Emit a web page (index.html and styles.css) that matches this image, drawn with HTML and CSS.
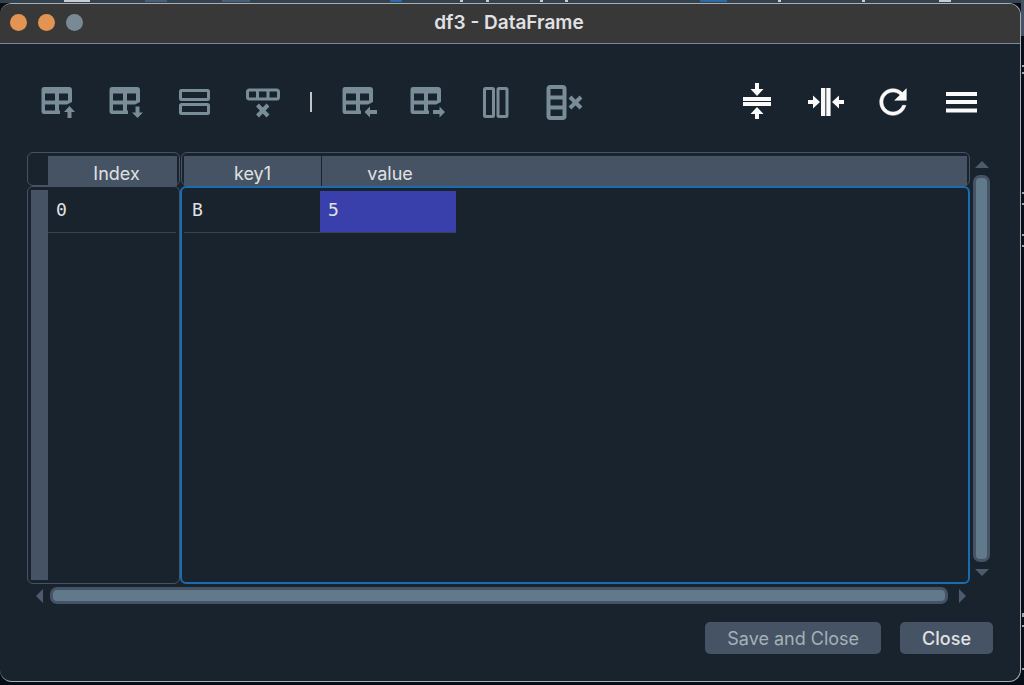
FILE: index.html
```
<!DOCTYPE html>
<html lang="en">
<head>
    <meta charset="UTF-8">
    <meta name="viewport" content="width=device-width, initial-scale=1.0">
    <title>df3 - DataFrame</title>
    <link rel="stylesheet" href="styles.css">
</head>
<body>
    <!-- shared icon shapes -->
    <svg class="sprite" aria-hidden="true">
        <symbol id="grid" viewBox="0 0 40 40">
            <path fill-rule="evenodd" d="M6 5H31Q34 5 34 8V20L29 22.500H21V28.500H22V32H6Q3.500 32 3.500 29V8Q3.500 5 6 5ZM7 11.500V18.500H17V11.500ZM21 11.500V18.500H30V11.500ZM7 22.500V28.500H17V22.500Z"/>
        </symbol>
    </svg>

    <div class="window">
        <header class="titlebar">
            <div class="lights">
                <span class="light"></span>
                <span class="light"></span>
                <span class="light light-off"></span>
            </div>
            <h1>df3 - DataFrame</h1>
        </header>

        <main class="content">
            <div class="toolbar" role="toolbar" aria-label="DataFrame tools">
                <button class="tool" disabled aria-label="Insert row above">
                    <svg viewBox="0 0 40 40"><use href="#grid"/><path d="M31.5 24L37 30H33.5V36H29.5V30H26Z"/></svg>
                </button>
                <button class="tool" disabled aria-label="Insert row below">
                    <svg viewBox="0 0 40 40"><use href="#grid"/><path d="M31.5 36L37 30.5H33.5V24.5H29.5V30.5H26Z"/></svg>
                </button>
                <button class="tool" disabled aria-label="Duplicate row">
                    <svg viewBox="0 0 40 40"><g class="line"><rect x="6.5" y="8.5" width="28" height="9" rx="1"/><rect x="6.5" y="22.5" width="28" height="9" rx="1"/></g></svg>
                </button>
                <button class="tool" disabled aria-label="Remove row">
                    <svg viewBox="0 0 40 40"><g class="line"><rect x="5.5" y="8" width="31" height="9" rx="2"/><path d="M15.5 8V17M26 8V17"/></g><path class="cross" d="M15.5 23L26 34M26 23L15.5 34"/></svg>
                </button>
                <span class="separator"></span>
                <button class="tool" disabled aria-label="Insert column before">
                    <svg viewBox="0 0 40 40"><use href="#grid"/><path d="M25.5 30L31 24.5V28H38V32H31V35.5Z"/></svg>
                </button>
                <button class="tool" disabled aria-label="Insert column after">
                    <svg viewBox="0 0 40 40"><use href="#grid"/><path d="M38 30L32.5 24.5V28H26V32H32.5V35.5Z"/></svg>
                </button>
                <button class="tool" disabled aria-label="Duplicate column">
                    <svg viewBox="0 0 40 40"><g class="line"><rect x="9.5" y="6.5" width="9" height="28" rx="1"/><rect x="23" y="6.5" width="9" height="28" rx="1"/></g></svg>
                </button>
                <button class="tool" disabled aria-label="Remove column">
                    <svg viewBox="0 0 40 40"><g class="line line-bold"><rect x="5.5" y="5" width="16" height="31" rx="2"/><path d="M5.5 15.500H21.5M5.500 25.500H21.5"/></g><path class="cross" d="M27 15L38 26M38 15L27 26"/></svg>
                </button>

                <button class="tool tool-first-right" aria-label="Resize rows to contents">
                    <svg viewBox="0 0 40 40"><path d="M6 15H34V19H6ZM6 20H34V24H6ZM18 1H22V7H26.5L20 14L13.5 7H18ZM20 25L26.5 32H22V37H18V32H13.5Z"/></svg>
                </button>
                <button class="tool" aria-label="Resize columns to contents">
                    <svg viewBox="0 0 40 40"><path d="M16 6H20.3V34H16ZM21.3 6H25.6V34H21.3ZM3 18H8V13.5L15 20L8 26.5V22H3ZM39 18H34V13.5L27 20L34 26.5V22H39Z"/></svg>
                </button>
                <button class="tool" aria-label="Refresh">
                    <svg viewBox="0 0 24 24"><path stroke="currentColor" stroke-width=".3" d="M17.65 6.35C16.2 4.9 14.21 4 12 4c-4.42 0-7.99 3.58-7.99 8s3.57 8 7.99 8c3.73 0 6.84-2.55 7.73-6h-2.08c-.82 2.33-3.04 4-5.65 4-3.31 0-6-2.69-6-6s2.69-6 6-6c1.66 0 3.14.69 4.22 1.78L13 11h7V4l-2.35 2.35z"/></svg>
                </button>
                <button class="tool" aria-label="Options">
                    <svg viewBox="0 0 40 40"><path d="M5 10H36V14H5ZM5 18H36V22H5ZM5 26.5H36V30.5H5Z"/></svg>
                </button>
            </div>

            <div class="viewer">
                <div class="tables">
                    <table class="index-table">
                        <thead>
                            <tr><th scope="col">Index</th></tr>
                        </thead>
                        <tbody>
                            <tr><th scope="row">0</th></tr>
                        </tbody>
                    </table>
                    <table class="data-table">
                        <thead>
                            <tr><th scope="col">key1</th><th scope="col">value</th></tr>
                        </thead>
                        <tbody>
                            <tr><td>B</td><td class="number">5</td></tr>
                        </tbody>
                    </table>
                </div>
                <div class="scroll scroll-y">
                    <svg viewBox="0 0 16 8"><path d="M8 0L15 7H1Z"/></svg>
                    <div class="thumb"></div>
                    <svg viewBox="0 0 16 8"><path d="M8 8L15 1H1Z"/></svg>
                </div>
                <div class="scroll scroll-x">
                    <svg viewBox="0 0 8 16"><path d="M0 8L7 1V15Z"/></svg>
                    <div class="thumb"></div>
                    <svg viewBox="0 0 8 16"><path d="M8 8L1 1V15Z"/></svg>
                </div>
            </div>

            <footer class="actions">
                <button class="btn" disabled>Save and Close</button>
                <button class="btn">Close</button>
            </footer>
        </main>
    </div>
</body>
</html>
```
FILE: styles.css
```
* {
    box-sizing: border-box;
}
body {
    margin: 0;
    padding: 3px 3px 3px 0;
    min-height: 100vh;
    display: flex;
    font-family: Inter, "Liberation Sans", sans-serif;
    font-size: 18px;
    color: #e0e1e3;
    /* bits of the desktop behind the window */
    background:
        linear-gradient(#c8ccd0, #c8ccd0) 64px 0 / 26px 2px no-repeat,
        linear-gradient(#456078, #456078) 145px 0 / 22px 2px no-repeat,
        linear-gradient(#456078, #456078) 222px 0 / 28px 2px no-repeat,
        linear-gradient(#2a6ba8, #2a6ba8) 390px 0 / 12px 2px no-repeat,
        linear-gradient(#c8ccd0, #c8ccd0) 460px 0 / 3px 2px no-repeat,
        linear-gradient(#c8ccd0, #c8ccd0) 486px 0 / 3px 2px no-repeat,
        linear-gradient(#c8ccd0, #c8ccd0) 540px 0 / 3px 2px no-repeat,
        linear-gradient(#c8ccd0, #c8ccd0) 565px 0 / 3px 2px no-repeat,
        linear-gradient(#2a6ba8, #2a6ba8) 700px 0 / 27px 2px no-repeat,
        linear-gradient(#c8ccd0, #c8ccd0) 778px 0 / 3px 2px no-repeat,
        linear-gradient(#c8ccd0, #c8ccd0) 862px 0 / 3px 2px no-repeat,
        linear-gradient(#c8ccd0, #c8ccd0) 939px 0 / 12px 2px no-repeat,
        linear-gradient(#a0a6ac, #a0a6ac) 100% 65px / 2px 2px no-repeat,
        linear-gradient(#a0a6ac, #a0a6ac) 100% 72px / 2px 2px no-repeat,
        linear-gradient(#a0a6ac, #a0a6ac) 100% 192px / 2px 2px no-repeat,
        linear-gradient(#a0a6ac, #a0a6ac) 100% 203px / 2px 2px no-repeat,
        linear-gradient(#a0a6ac, #a0a6ac) 100% 234px / 2px 2px no-repeat,
        linear-gradient(#a0a6ac, #a0a6ac) 100% 245px / 2px 2px no-repeat,
        linear-gradient(#a0a6ac, #a0a6ac) 100% 613px / 2px 4px no-repeat,
        linear-gradient(#a0a6ac, #a0a6ac) 100% 625px / 2px 2px no-repeat,
        linear-gradient(#a0a6ac, #a0a6ac) 100% 668px / 2px 2px no-repeat,
        linear-gradient(#455364, #455364) 100% 0 / 3px 36px no-repeat,
        linear-gradient(#344250, #344250) 0 0 / 100% 3px no-repeat,
        #070d16;
}
.sprite {
    position: absolute;
    width: 0;
    height: 0;
}
.window {
    flex: 1;
    display: flex;
    flex-direction: column;
    overflow: hidden;
    background: #19232d;
    border: 1px solid #a9b0b5;
    border-left: none;
    border-radius: 12px;
}

/* title bar */
.titlebar {
    display: grid;
    grid-template-columns: 1fr auto 1fr;
    align-items: center;
    height: 40px;
    padding: 0 12px 2px 10px;
    background: #383838;
    border-bottom: 1px solid #7c8a93;
}
.titlebar h1 {
    margin: 0;
    font-size: 19px;
    line-height: 24px;
    font-weight: 600;
}
.lights {
    display: flex;
    gap: 11px;
}
.light {
    width: 17px;
    height: 17px;
    border-radius: 50%;
    background: #e39352;
}
.light-off {
    background: #788b94;
}

.content {
    flex: 1;
    display: flex;
    flex-direction: column;
    padding: 36px 27px 27px;
}

/* toolbar */
.toolbar {
    display: flex;
    align-items: center;
    margin: 0 -2px 28px -3px;
}
.tool {
    width: 68px;
    height: 44px;
    padding: 0;
    display: flex;
    align-items: center;
    justify-content: center;
    border: none;
    background: none;
    color: #fafafa;
}
.tool:disabled {
    color: #788d98;
}
.tool svg {
    width: 40px;
    height: 40px;
    fill: currentColor;
}
.tool .line {
    fill: none;
    stroke: currentColor;
    stroke-width: 3;
}
.tool .line-bold {
    stroke-width: 4;
}
.tool .cross {
    fill: none;
    stroke: currentColor;
    stroke-width: 4;
}
.tool-first-right {
    margin-left: auto;
}
.separator {
    width: 2px;
    height: 20px;
    margin: 0 13px 0 14px;
    background: #c0c4c8;
}

/* tables */
.viewer {
    flex: 1;
    display: grid;
    grid-template-columns: 1fr 17px;
    grid-template-rows: 1fr 17px;
    gap: 3px;
    margin-right: 3px;
}
.tables {
    display: flex;
}
table, thead, tbody {
    display: flex;
    flex-direction: column;
}
tr {
    display: flex;
}
thead {
    height: 34px;
    padding: 3px 2px 0;
    border: 1px solid #455364;
    border-radius: 6px;
}
thead th {
    width: 137px;
    height: 30px;
    padding-top: 3px;
    line-height: 30px;
    font-weight: 400;
    background: #455364;
}
tbody {
    flex: 1;
    padding: 3px 2px;
    border: 1px solid #455364;
    border-radius: 6px;
}
tbody th, tbody td {
    width: 136px;
    height: 42px;
    padding: 0 8px;
    line-height: 38px;
    font-family: "DejaVu Sans Mono", monospace;
    font-weight: 400;
    text-align: left;
    border-bottom: 1px solid #36424e;
}
.index-table {
    width: 153px;
}
.index-table thead {
    padding-left: 20px;
}
.index-table thead th {
    flex: 1;
    padding-left: 9px;
}
.index-table tbody {
    /* row header gutter */
    padding: 4px 3px 3px 20px;
    background: linear-gradient(#455364, #455364) 3px 3px / 17px calc(100% - 6px) no-repeat;
}
.index-table tbody th {
    flex: 1;
}
.data-table {
    flex: 1;
}
.data-table thead {
    margin-left: 1px;
}
.data-table thead tr {
    background: #455364;
}
.data-table thead th + th {
    border-left: 1px solid #19232d;
}
.data-table tbody {
    border: 2px solid #1a6cb0;
}
.data-table .number {
    background: #3a40ab;
}

/* scroll bars */
.scroll {
    display: flex;
    align-items: center;
    gap: 6px;
}
.scroll svg {
    fill: #4c5c6d;
}
.thumb {
    flex: 1;
    background: #60798b;
    border: 3px solid #455364;
    border-radius: 7px;
}
.scroll-y {
    flex-direction: column;
    padding: 9px 0 8px;
}
.scroll-y .thumb {
    width: 17px;
}
.scroll-y svg {
    width: 16px;
    height: 8px;
}
.scroll-x {
    padding: 0 4px 0 9px;
}
.scroll-x .thumb {
    height: 17px;
    margin-right: 4px;
}
.scroll-x svg {
    width: 8px;
    height: 16px;
}

/* bottom buttons */
.actions {
    display: flex;
    justify-content: flex-end;
    gap: 19px;
    margin-top: 18px;
}
.btn {
    height: 32px;
    padding: 0 22px;
    border: none;
    border-radius: 5px;
    background: #455364;
    color: #e0e1e3;
    font: inherit;
    font-weight: 500;
}
.btn:disabled {
    color: #a6b0b8;
    font-weight: 400;
}
```
